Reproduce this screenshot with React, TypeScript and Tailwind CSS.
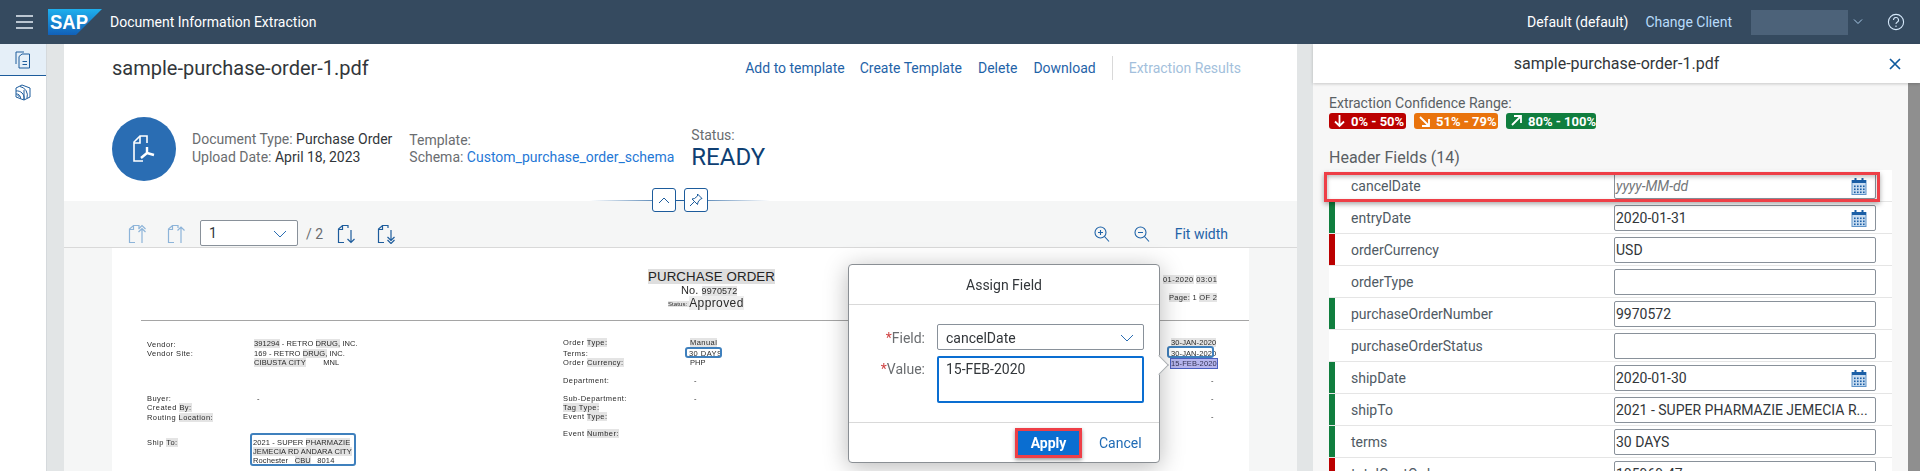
const FONT = "font-['Roboto',sans-serif]";

function Calendar() {
  return (
    <svg width="16" height="17" viewBox="0 0 16 17" className="absolute right-[8px] top-[4px]">
      <rect x="1" y="2.5" width="14" height="14" fill="#c9ddf1" stroke="#5f93c8" strokeWidth="1" />
      <rect x="1" y="2" width="14" height="3" fill="#1b5fa6" />
      <rect x="3.5" y="0" width="2" height="3" fill="#1b5fa6" />
      <rect x="10.5" y="0" width="2" height="3" fill="#1b5fa6" />
      {[7.5, 10.5, 13.5].flatMap((y) =>
        [3, 6, 9, 12].map((x) => <rect key={`${x}-${y}`} x={x} y={y} width="1.6" height="1.6" fill="#1b5fa6" />)
      )}
    </svg>
  );
}

const rows: { label: string; value?: string; bar?: string; date?: boolean; placeholder?: string }[] = [
  { label: "cancelDate", date: true, placeholder: "yyyy-MM-dd" },
  { label: "entryDate", value: "2020-01-31", bar: "bg-[#107e3e]", date: true },
  { label: "orderCurrency", value: "USD", bar: "bg-[#bb0000]" },
  { label: "orderType" },
  { label: "purchaseOrderNumber", value: "9970572", bar: "bg-[#107e3e]" },
  { label: "purchaseOrderStatus" },
  { label: "shipDate", value: "2020-01-30", bar: "bg-[#107e3e]", date: true },
  { label: "shipTo", value: "2021 - SUPER PHARMAZIE JEMECIA R...", bar: "bg-[#107e3e]" },
  { label: "terms", value: "30 DAYS", bar: "bg-[#107e3e]" },
  { label: "totalCostOrder", value: "105969.47", bar: "bg-[#bb0000]" },
];

function Row({ r }: { r: (typeof rows)[number] }) {
  return (
    <div className="flex h-[32px] shrink-0 border-b border-[#e5e5e5] bg-white">
      <div className={`h-full w-[6px] shrink-0 ${r.bar ?? ""}`} />
      <div className="w-[279px] shrink-0 pl-[16px] pt-[8px] text-[14px] leading-[17px] text-[#4f5a64]">{r.label}</div>
      <div className="relative mt-[3px] h-[26px] w-[262px] shrink-0 whitespace-nowrap rounded-[2px] border border-[#89919a] bg-white pl-[1px] text-[14px] leading-[25px] text-[#32363a]">
        {r.placeholder ? <span className="italic text-[#74777a]">{r.placeholder}</span> : r.value}
        {r.date && <Calendar />}
      </div>
    </div>
  );
}

function Badge({ color, w, arrow, text }: { color: string; w: string; arrow: string; text: string }) {
  return (
    <div className={`flex h-[16px] items-center gap-[5px] rounded-[3px] pl-[4px] text-[13px] font-bold leading-none text-white ${color} ${w}`}>
      <svg width="13" height="14" viewBox="0 0 13 14" fill="none" stroke="white" strokeWidth="1.8" className="shrink-0">
        <path d={arrow} />
      </svg>
      <span className="whitespace-nowrap">{text}</span>
    </div>
  );
}

function DocIcon({ arrow, color }: { arrow: string; color: string }) {
  return (
    <svg width="18" height="20" viewBox="0 0 18 20" fill="none" stroke={color} strokeWidth="1.2">
      <path d="M7 18.5H1.5V5L5.5 1.5H11V4" />
      <path d="M1.5 5.500H5.500V1.500" />
      <path d={arrow} />
    </svg>
  );
}

function P({ x, y, children, cls = "" }: { x: number; y: number; children: React.ReactNode; cls?: string }) {
  return (
    <div
      className={`absolute whitespace-pre font-['Liberation_Sans',sans-serif] text-[7.5px] leading-[9px] tracking-[0.1px] text-[#2a2a2a] ${cls}`}
      style={{ left: x - 112, top: y - 249 - 4 }}
    >
      {children}
    </div>
  );
}
const hl = "bg-[#e4e4e4]";
const lb = "tracking-[0.45px]";

function PdfPage() {
  return (
    <div className="relative ml-[48px] mr-[48px] h-[230px] overflow-hidden bg-white">
      <div className="blur-[0.3px]">
        <P x={648} y={277} cls="-mt-[3px] bg-[#dedede] text-[13.3px] leading-[15px] tracking-[0.1px] text-[#222]">PURCHASE ORDER</P>
        <P x={681} y={290} cls="text-[11px] leading-[11px]">No. <span className={`${hl} text-[9px]`}>9970572</span></P>
        <P x={668} y={304}><span className={`text-[6px] ${hl}`}>Status: </span><span className="align-[-1px] bg-[#eeeeee] text-[12px] tracking-[.4px]">Approved</span></P>
        <div className="absolute left-[29px] right-[-40px] top-[72px] h-px bg-[#a5a5a5]" />
        <P x={147} y={345} cls={lb}>Vendor:</P>
        <P x={147} y={354} cls={lb}>Vendor Site:</P>
        <P x={254} y={344}><span className={hl}>391294</span> - RETRO <span className={hl}>DRUG,</span> INC.</P>
        <P x={254} y={354}>169 - RETRO <span className={hl}>DRUG,</span> INC.</P>
        <P x={254} y={363}><span className={hl}>CIBUSTA CITY</span>        MNL</P>
        <P x={147} y={399} cls={lb}>Buyer:</P>
        <P x={147} y={408} cls={lb}>Created <span className={hl}>By:</span></P>
        <P x={147} y={418} cls={lb}>Routing <span className={hl}>Location:</span></P>
        <P x={257} y={399}>-</P>
        <P x={147} y={443} cls={lb}>Ship <span className={hl}>To:</span></P>
        <P x={253} y={443}>2021 - SUPER <span className={hl}>PHARMAZIE</span></P>
        <P x={253} y={452}><span className={hl}>JEMECIA RD ANDARA CITY</span></P>
        <P x={253} y={461}>Rochester   <span className={hl}>CBU</span>   8014</P>
        <P x={563} y={343} cls={lb}>Order <span className={hl}>Type:</span></P>
        <P x={563} y={354} cls={lb}>Terms:</P>
        <P x={563} y={363} cls={lb}>Order <span className={hl}>Currency:</span></P>
        <P x={563} y={381} cls={lb}>Department:</P>
        <P x={563} y={399} cls={lb}>Sub-Department:</P>
        <P x={563} y={408} cls={lb}><span className={hl}>Tag Type:</span></P>
        <P x={563} y={417} cls={lb}>Event <span className={hl}>Type:</span></P>
        <P x={563} y={434} cls={lb}>Event <span className={hl}>Number:</span></P>
        <P x={690} y={343} cls={lb}><span className={hl}>Manual</span></P>
        <P x={689} y={354} cls={lb}>30 DAYS</P>
        <P x={690} y={363}>PHP</P>
        <P x={694} y={381}>-</P>
        <P x={694} y={399}>-</P>
        <P x={1163} y={280} cls={lb}><span className={hl}>01-2020</span> <span className={hl}>03:01</span></P>
        <P x={1169} y={298} cls="tracking-[0.3px]"><span className={hl}>Page:</span> 1 <span className={hl}>OF 2</span></P>
        <P x={1171} y={343}><span className={hl}>30-JAN-2020</span></P>
        <P x={1171} y={354}>30-JAN-2020</P>
        <P x={1170} y={363} cls="border border-[#4a5fc0] bg-[#b6b6ee] text-[#335]">15-FEB-2020</P>
        <P x={1211} y={381}>-</P>
        <P x={1211} y={399}>-</P>
        <P x={1211} y={417}>-</P>
      </div>
      <div className="absolute left-[138px] top-[185px] h-[33px] w-[106px] rounded-[3px] border-2 border-[#3f80bd]" />
      <div className="absolute left-[573px] top-[99px] h-[11px] w-[37px] rounded-[3px] border-2 border-[#3f80bd]" />
      <div className="absolute left-[1055px] top-[98px] h-[12px] w-[47px] rounded-[3px] border-2 border-[#3f80bd]" />
    </div>
  );
}

function Dialog() {
  return (
    <div className="absolute left-[848px] top-[264px] h-[199px] w-[312px] rounded-[4px] border border-[#8a8f94] bg-white shadow-[0_4px_24px_rgba(0,0,0,0.28)]">
      <div className="absolute right-[-7px] top-[93px] h-[14px] w-[14px] rotate-45 border-r border-t border-[#a9adb0] bg-white" />
      <div className="relative flex h-[40px] items-center justify-center border-b border-[#d9d9d9] pt-[2px] text-[14px] text-[#32363a]">Assign Field</div>
      <div className="relative flex h-[118px] flex-col gap-[6px] border-b border-[#d9d9d9] pt-[19px]">
        <div className="flex">
          <div className="w-[76px] pt-[5px] text-right text-[14px] leading-[19px] text-[#6a6d70]"><span className="text-[#d04343]">*</span>Field:</div>
          <div className="relative ml-[12px] flex h-[26px] w-[207px] items-center rounded-[2px] border border-[#89919a] pl-[8px] pt-[2px] text-[14px] text-[#32363a]">
            cancelDate
            <svg width="14" height="8" viewBox="0 0 14 8" fill="none" stroke="#2a6db3" strokeWidth="1" className="absolute right-[9px] top-[9px]"><path d="M1 1l6 6 6-6" /></svg>
          </div>
        </div>
        <div className="flex">
          <div className="w-[76px] pt-[4px] text-right text-[14px] leading-[19px] text-[#6a6d70]"><span className="text-[#d04343]">*</span>Value:</div>
          <div className="ml-[12px] h-[47px] w-[207px] rounded-[2px] border-2 border-[#0a6ed1] pl-[7px] pt-[2px] text-[14px] leading-[19px] text-[#32363a]">15-FEB-2020</div>
        </div>
      </div>
      <div className="relative flex items-center pl-[166px] pt-[5px]">
        <div className="flex h-[30px] w-[67px] items-center justify-center border-[3px] border-[#ee3f47] bg-[#0a6ed1] pt-[1px] text-[14px] font-bold text-white shadow-[0_2px_4px_rgba(0,0,0,0.4)]">Apply</div>
        <div className="ml-[17px] pt-[1px] text-[14px] text-[#1f6bb5]">Cancel</div>
      </div>
    </div>
  );
}

export default function App() {
  return (
    <div className={`relative flex h-[471px] w-[1920px] flex-col overflow-hidden bg-white ${FONT}`}>
      <header className="flex h-[44px] shrink-0 items-center bg-[#354a5f] text-[14px]">
        <svg width="18" height="14" viewBox="0 0 18 14" className="ml-[16px]" stroke="#e8f0f8" strokeWidth="1.6">
          <path d="M0 1h17M0 7h17M0 13h17" />
        </svg>
        <svg width="54" height="26" viewBox="0 0 54 26" className="ml-[14px]">
          <defs>
            <linearGradient id="sap" x1="0" y1="0" x2="0" y2="1">
              <stop offset="0" stopColor="#1eb0ee" />
              <stop offset="1" stopColor="#1160b8" />
            </linearGradient>
          </defs>
          <path d="M0 0H54L28 26H0Z" fill="url(#sap)" />
          <text x="2" y="20" fontFamily="Liberation Sans" fontWeight="700" fontSize="21" fill="white" textLength="38" lengthAdjust="spacingAndGlyphs">SAP</text>
        </svg>
        <span className="ml-[8px] text-white">Document Information Extraction</span>
        <div className="ml-auto flex items-center">
          <span className="text-white">Default (default)</span>
          <span className="ml-[17px] text-[#b9dcfb]">Change Client</span>
          <div className="ml-[19px] h-[25px] w-[97px] bg-[#4c6279]" />
          <svg width="10" height="6" viewBox="0 0 10 6" fill="none" stroke="#a9c9e8" className="ml-[5px]"><path d="M1 .5l4 4 4-4" /></svg>
          <svg width="18" height="18" viewBox="0 0 18 18" fill="none" stroke="#d5e8fa" strokeWidth="1.1" className="ml-[24px] mr-[15px]">
            <circle cx="9" cy="9" r="7.6" />
            <path d="M6.500 7a2.500 2.500 0 1 1 3.600 2.200c-.8.4-1.100.9-1.100 1.800M9 12.600v1.300" />
          </svg>
        </div>
      </header>
      <div className="flex min-h-0 flex-1">
        <nav className="w-[47px] shrink-0 border-r border-[#d5d9dc] bg-white">
          <div className="flex h-[32px] items-center justify-center border-b border-[#1d5c9c] bg-[#e5eff8]">
            <svg width="16" height="18" viewBox="0 0 16 18" fill="none" stroke="#1d5c9c" strokeWidth="1">
              <path d="M1 13V1H9" />
              <path d="M4 17V5.500L7 3H14.500V17Z" />
              <path d="M7.500 10.500H12M7.500 13.500H12" />
            </svg>
          </div>
          <div className="flex h-[32px] items-center justify-center">
            <svg width="16" height="17" viewBox="0 0 16 17" fill="none" stroke="#1d5c9c" strokeWidth="1">
              <path d="M1 4L7 1l8 3v9l-6 3-8-3Z" />
              <path d="M1 7a7 7 0 0 1 8 8M1 10a4 4 0 0 1 4.500 4.500M5 2.500a9 9 0 0 1 7 11.500M9 16V6M2.500 11l2 2" />
            </svg>
          </div>
        </nav>
        <div className="w-[17px] shrink-0 bg-[#e2e5e6]" />
        <main className="relative flex w-[1233px] shrink-0 flex-col bg-[#f5f6f6]">
          <section className="h-[157px] shrink-0 bg-white px-[48px]">
            <div className="flex h-[48px] items-center">
              <h1 className="text-[20px] font-normal text-[#32363a]">sample-purchase-order-1.pdf</h1>
              <div className="ml-auto flex items-center text-[14px] text-[#1f63a8]">
                <span>Add to template</span>
                <span className="ml-[15px]">Create Template</span>
                <span className="ml-[16px]">Delete</span>
                <span className="ml-[16px]">Download</span>
                <div className="ml-[16px] h-[24px] w-px bg-[#d9d9d9]" />
                <span className="ml-[16px] mr-[8px] text-[#a3bfdc]">Extraction Results</span>
              </div>
            </div>
            <div className="mt-[25px] flex items-start">
              <div className="flex h-[64px] w-[64px] items-center justify-center rounded-full bg-[#2a6db3]">
                <svg width="26" height="30" viewBox="0 0 26 30" fill="none" stroke="white" strokeWidth="1.6">
                  <path d="M12 27H3V8L9 2H16V9" />
                  <path d="M3 9H9V2" />
                  <path d="M16 13V19M16 19L10 24M16 19L23 21" strokeWidth="2.4" />
                </svg>
              </div>
              <div className="ml-[16px] mt-[13px] text-[14px] leading-[18px] text-[#6a6d70]">
                <div>Document Type: <span className="text-[#32363a]">Purchase Order</span></div>
                <div>Upload Date: <span className="text-[#32363a]">April 18, 2023</span></div>
              </div>
              <div className="ml-[17px] mt-[15px] text-[14px] leading-[17px] text-[#6a6d70]">
                <div>Template:</div>
                <div>Schema: <span className="text-[#1f78d6]">Custom_purchase_order_schema</span></div>
              </div>
              <div className="ml-[17px] mt-[9px] text-[14px] leading-[18px] text-[#6a6d70]">
                <div>Status:</div>
                <div className="-mt-[1px] text-[24px] leading-[28px] text-[#0f3f73]">READY</div>
              </div>
            </div>
          </section>
          <div className="relative flex h-[47px] shrink-0 items-center border-b border-[#d9d9d9] pl-[64px] pr-[69px]">
            <div className="flex items-center gap-[21px] pt-[20px]">
              <DocIcon color="#8db4d9" arrow="M14 19V5M10.500 8L14 4.500 17.500 8M10.500 5L14 1.500 17.500 5" />
              <DocIcon color="#8db4d9" arrow="M14 19V3M10.500 6.500L14 3l3.500 3.500" />
            </div>
            <div className="relative ml-[15px] mt-[18px] flex h-[26px] w-[98px] items-center rounded-[2px] border border-[#89919a] bg-white pl-[8px] text-[14px] text-[#32363a]">
              1
              <svg width="14" height="8" viewBox="0 0 14 8" fill="none" stroke="#2a6db3" className="absolute right-[10px] top-[9px]"><path d="M1 1l6 6 6-6" /></svg>
            </div>
            <span className="ml-[8px] mt-[20px] text-[14px] text-[#6a6d70]">/ 2</span>
            <div className="ml-[14px] flex items-center gap-[22px] pt-[20px]">
              <DocIcon color="#1d5c9c" arrow="M14 6V18.500M10.500 15L14 18.500 17.500 15" />
              <DocIcon color="#1d5c9c" arrow="M14 6V17M10.500 13L14 16.500 17.500 13M10.500 16L14 19.500 17.500 16" />
            </div>
            <div className="ml-auto flex items-center pt-[20px] text-[14px] text-[#1f63a8]">
              <svg width="16" height="17" viewBox="0 0 16 17" fill="none" stroke="#1f63a8" strokeWidth="1.1"><circle cx="6.500" cy="6.500" r="5.500" /><path d="M10.500 10.500L15 15.500M4 6.500h5M6.500 4v5" /></svg>
              <svg width="16" height="17" viewBox="0 0 16 17" fill="none" stroke="#1f63a8" strokeWidth="1.1" className="ml-[24px]"><circle cx="6.500" cy="6.500" r="5.500" /><path d="M10.500 10.500L15 15.500M4 6.500h5" /></svg>
              <span className="ml-[25px]">Fit width</span>
            </div>
            <div className="absolute left-[526px] top-[-1px] h-px w-[180px] bg-gradient-to-r from-transparent via-[#1d5c9c] to-transparent" />
            <div className="absolute left-[588px] top-[-13px] flex gap-[8px]">
              <div className="flex h-[24px] w-[24px] items-center justify-center rounded-[3px] border border-[#1d5c9c] bg-white">
                <svg width="12" height="7" viewBox="0 0 12 7" fill="none" stroke="#1d5c9c"><path d="M1 6l5-5 5 5" /></svg>
              </div>
              <div className="flex h-[24px] w-[24px] items-center justify-center rounded-[3px] border border-[#1d5c9c] bg-white">
                <svg width="14" height="14" viewBox="0 0 14 14" fill="none" stroke="#1d5c9c"><path d="M8.500 1l4.500 4.500-1.500.5-2.500 3-.5 2.500L3 6l2.500-.5 3-2.500ZM5.500 8.500L1 13" /></svg>
              </div>
            </div>
          </div>
          <PdfPage />
        </main>
        <div className="w-[16px] shrink-0 bg-[#e2e5e6]" />
        <aside className="flex w-[607px] shrink-0 flex-col bg-[#f7f7f7]">
          <div className="relative z-10 flex h-[39px] shrink-0 items-center justify-center bg-white text-[16px] text-[#32363a] shadow-[0_1px_3px_rgba(0,0,0,0.2)]">
            sample-purchase-order-1.pdf
            <svg width="14" height="14" viewBox="0 0 14 14" fill="none" stroke="#0f5a9e" strokeWidth="1.700" className="absolute right-[18px] top-[13px]"><path d="M2 2l10 10M12 2L2 12" /></svg>
          </div>
          <div className="flex min-h-0 flex-1">
            <div className="relative w-[595px] shrink-0 overflow-hidden pl-[16px] pr-[16px]">
              <div className="mt-[11px] text-[14px] leading-[19px] text-[#5a5f64]">Extraction Confidence Range:</div>
              <div className="flex gap-[8px]">
                <Badge color="bg-[#bb0000]" w="w-[77px]" arrow="M6.500 1v11M2 7.500l4.500 4.500 4.500-4.500" text="0% - 50%" />
                <Badge color="bg-[#e9730c]" w="w-[84px]" arrow="M2 3l9 9M4 12h7V5" text="51% - 79%" />
                <Badge color="bg-[#107e3e]" w="w-[90px]" arrow="M2 11l9-9M4 2h7v7" text="80% - 100%" />
              </div>
              <div className="mt-[18px] text-[16px] leading-[21px] text-[#5a5f64]">Header Fields (14)</div>
              <div className="mt-[2px] flex flex-col">
                {rows.map((r) => <Row key={r.label} r={r} />)}
              </div>
              <div className="absolute left-[11px] top-[89px] h-[30px] w-[556px] border-[3px] border-[#ee3f47] shadow-[0_2px_5px_rgba(0,0,0,0.35),inset_0_2px_4px_rgba(0,0,0,0.25)]" />
            </div>
            <div className="w-[12px] shrink-0 bg-[#8f8f8f]" />
          </div>
        </aside>
      </div>
      <Dialog />
    </div>
  );
}
